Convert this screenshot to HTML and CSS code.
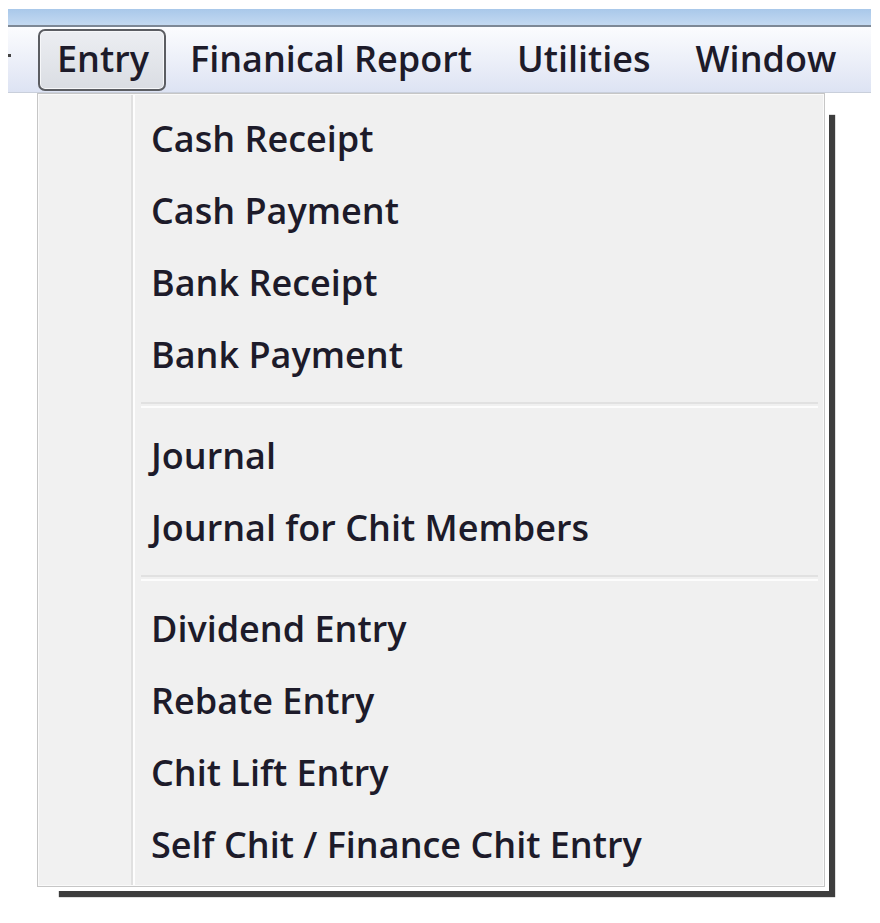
FILE: index.html
```html
<!DOCTYPE html>
<html lang="en">
<head>
  <meta charset="UTF-8" />
  <title>Entry menu</title>
  <link rel="stylesheet" href="styles.css">
</head>
<body>
  <div class="window">
    <div class="titlebar"></div>
    <div class="menubar">
      <span class="dot"></span>
      <span class="menu-link open">Entry</span>
      <span class="menu-link">Finanical Report</span>
      <span class="menu-link">Utilities</span>
      <span class="menu-link">Window</span>
    </div>
  </div>

  <div class="dropdown">
    <div class="gutter"></div>
    <div class="items">
      <div class="item">Cash Receipt</div>
      <div class="item">Cash Payment</div>
      <div class="item">Bank Receipt</div>
      <div class="item">Bank Payment</div>
      <div class="sep"></div>
      <div class="item">Journal</div>
      <div class="item">Journal for Chit Members</div>
      <div class="sep"></div>
      <div class="item">Dividend Entry</div>
      <div class="item">Rebate Entry</div>
      <div class="item">Chit Lift Entry</div>
      <div class="item">Self Chit / Finance Chit Entry</div>
    </div>
  </div>
</body>
</html>
```

FILE: styles.css
```css
body {
  margin: 0;
  background: #fff;
  font-family: 'Open Sans', 'Noto Sans', sans-serif;
  color: #1d1b2a;
}
.window {
  margin: 9px 0 0 8px;
  width: 863px;
}
.titlebar {
  height: 16px;
  background: linear-gradient(#a9c8ea, #c3d9f1);
  border-bottom: 2px solid #7d8896;
}
.menubar {
  height: 65px;
  display: flex;
  align-items: center;
  gap: 3px;
  background: linear-gradient(#fbfcfe, #eef1f9 45%, #dde3f3);
  border-bottom: 1px solid #c9cfdb;
}
.dot {
  width: 3px;
  height: 3px;
  background: #444;
  margin-right: 24px;
  margin-top: -8px;
}
.menu-link {
  font-size: 36px;
  font-weight: 600;
  line-height: 1;
  padding: 10px 19px 12px;
  border: 2px solid transparent;
  border-radius: 7px;
  white-space: nowrap;
}
.menu-link.open {
  border-color: #5b5d62;
  background: linear-gradient(#eceef2, #dadde3);
  box-shadow: inset 0 0 0 1px #f6f7f9;
  padding: 10px 15px 12px 17px;
}
.dropdown {
  position: absolute;
  left: 37px;
  top: 93px;
  width: 786px;
  height: 792px;
  display: flex;
  background: #f0f0f0;
  border: 1px solid #c6c6c6;
  box-shadow: inset 0 0 0 1px #fafafa, 4px 4px 0 0 #fff, 16px 16px 1px -6px #3d3d3d;
}
.gutter {
  width: 92px;
  flex-shrink: 0;
  background: #f1f1f1;
  border-right: 2px solid #e0e0e0;
  box-shadow: 2px 0 0 #fdfdfd;
  margin: 1px 0 1px 1px;
}
.items {
  flex: 1;
  padding: 8px 6px 8px 6px;
  margin-left: 2px;
}
.item {
  height: 72px;
  display: flex;
  align-items: center;
  padding-left: 10px;
  font-size: 36px;
  font-weight: 600;
  white-space: nowrap;
}
.sep {
  height: 29px;
  display: flex;
  align-items: center;
}
.sep::before {
  content: '';
  flex: 1;
  height: 2px;
  border-top: 2px solid #e1e1e1;
  border-bottom: 2px solid #fcfcfc;
}
```
